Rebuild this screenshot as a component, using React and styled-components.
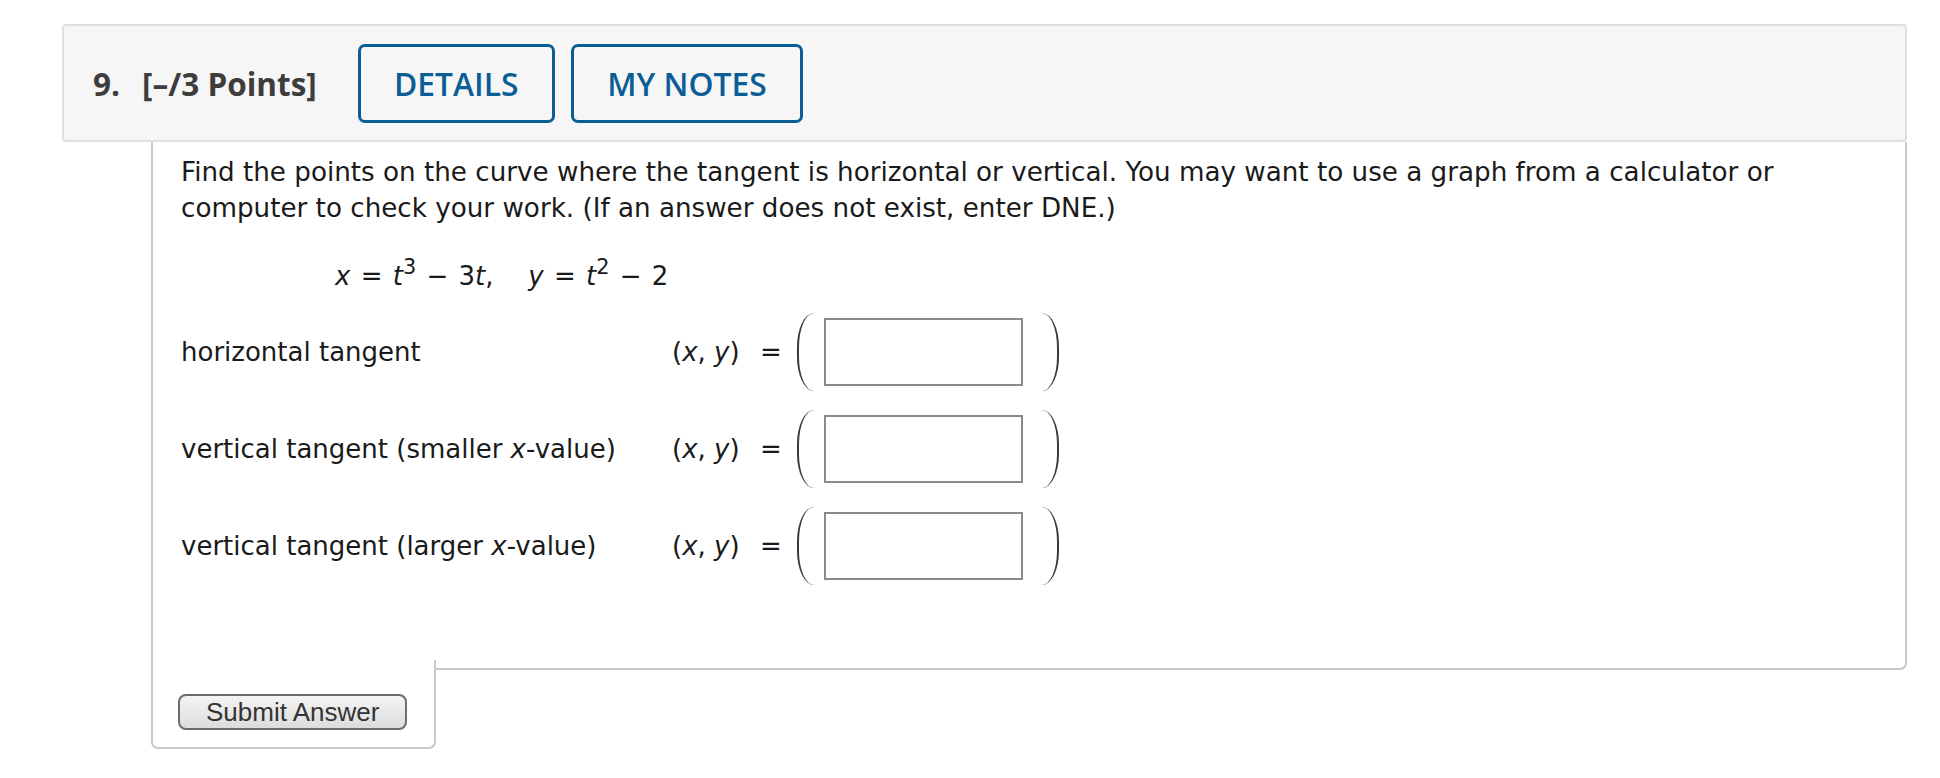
import React from 'react';
import styled, { createGlobalStyle } from 'styled-components';

const GlobalStyle = createGlobalStyle`
  body {
    margin: 0;
    background: #fff;
  }
`;

const Page = styled.div`
  padding: 24px 33px 0 62px;
`;

const QuestionHeader = styled.div`
  box-sizing: border-box;
  height: 118px;
  display: flex;
  align-items: center;
  padding-left: 29px;
  background: #f6f6f6;
  border: 2px solid #dfdfdf;
  border-radius: 4px;
  font-family: "Open Sans", "Noto Sans", sans-serif;
`;

const QuestionNumber = styled.span`
  font-size: 31.5px;
  font-weight: 700;
  color: #3d3d3d;
  margin-right: 22px;
`;

const PointsLabel = styled.span`
  font-size: 31.5px;
  font-weight: 700;
  color: #3d3d3d;
  margin-right: 41px;
`;

const HeaderButton = styled.button`
  box-sizing: border-box;
  height: 79px;
  padding: 0 33.3px;
  margin-right: 16px;
  background: transparent;
  border: 3.5px solid #0b5e95;
  border-radius: 7px;
  font-family: "Open Sans", "Noto Sans", sans-serif;
  font-size: 31.8px;
  font-weight: 600;
  color: #0b5e95;
  cursor: pointer;
`;

const Card = styled.div`
  margin-left: 89px;
`;

const QuestionBody = styled.div`
  border-left: 2px solid #c9c9c9;
  border-right: 2px solid #c9c9c9;
  padding: 12px 28px 76px 28px;
  font-family: "DejaVu Sans", Verdana, sans-serif;
  font-size: 26px;
  line-height: 36px;
  color: #1a1a1a;
`;

const Prompt = styled.p`
  margin: 0;
  font-size: 26.2px;
`;

const Equation = styled.div`
  margin: 32px 0 0 154px;
  white-space: pre;

  i {
    font-style: italic;
  }
  sup {
    font-size: 0.8em;
    line-height: 0;
    vertical-align: 0.55em;
  }
`;

const Op = styled.span`
  margin: 0 ${(p) => p.$gap || 2}px;
`;

const AnswerRows = styled.div`
  margin-top: 19px;
  display: flex;
  flex-direction: column;
  gap: 20px;
`;

const AnswerRow = styled.div`
  display: flex;
  align-items: center;
  height: 77px;
`;

const RowLabel = styled.span`
  width: 491px;
`;

const Coord = styled.span`
  width: 88px;
`;

const Equals = styled.span`
  width: 37px;
`;

const Paren = styled.span`
  box-sizing: border-box;
  display: block;
  width: 17px;
  height: 78px;
  border-color: #3a3a3a;
  border-style: solid;
  border-width: ${(p) => (p.$right ? '0 2.5px 0 0' : '0 0 0 2.5px')};
  border-radius: ${(p) =>
    p.$right ? '0 17px 17px 0 / 0 34px 34px 0' : '17px 0 0 17px / 34px 0 0 34px'};
`;

const AnswerInput = styled.input`
  box-sizing: border-box;
  width: 199px;
  height: 68px;
  margin: 0 19px 0 10px;
  border: 2px solid #8a8a8a;
  background: #fff;
  font-family: "DejaVu Sans", Verdana, sans-serif;
  font-size: 24px;
  outline: none;
`;

const BottomRow = styled.div`
  display: flex;
  align-items: flex-start;
`;

const SubmitTab = styled.div`
  box-sizing: border-box;
  width: 285px;
  padding: 34px 0 17px 25px;
  border-left: 2px solid #c9c9c9;
  border-right: 2px solid #c9c9c9;
  border-bottom: 2px solid #c9c9c9;
  border-radius: 0 0 7px 7px;
`;

const SubmitButton = styled.button`
  box-sizing: border-box;
  height: 36px;
  padding: 0 26px;
  border: 2px solid #6c6c6c;
  border-radius: 8px;
  background: linear-gradient(#f4f4f4, #dcdcdc);
  font-family: "Liberation Sans", Arial, sans-serif;
  font-size: 26px;
  line-height: 30px;
  color: #333;
  cursor: pointer;
`;

const BodyCorner = styled.div`
  flex: 1;
  height: 8px;
  margin-left: -1px;
  border-right: 2px solid #c9c9c9;
  border-bottom: 2px solid #c9c9c9;
  border-bottom-right-radius: 7px;
`;

const rows = [
  { label: 'horizontal tangent' },
  { label: 'vertical tangent (smaller ', suffix: '-value)' },
  { label: 'vertical tangent (larger ', suffix: '-value)' },
];

export default function App() {
  return (
    <Page>
      <GlobalStyle />
      <QuestionHeader>
        <QuestionNumber>9.</QuestionNumber>
        <PointsLabel>[–/3 Points]</PointsLabel>
        <HeaderButton>DETAILS</HeaderButton>
        <HeaderButton>MY NOTES</HeaderButton>
      </QuestionHeader>

      <Card>
        <QuestionBody>
          <Prompt>
            Find the points on the curve where the tangent is horizontal or vertical. You may want
            to use a graph from a calculator or computer to check your work. (If an answer does not
            exist, enter DNE.)
          </Prompt>
          <Equation>
            <i>x</i> <Op>=</Op> <i>t</i>
            <sup>3</sup> <Op>−</Op> 3<i>t</i>,<Op $gap={5}>   </Op><i>y</i> <Op>=</Op> <i>t</i>
            <sup>2</sup> <Op>−</Op> 2
          </Equation>
          <AnswerRows>
            {rows.map((row) => (
              <AnswerRow key={row.label}>
                <RowLabel>
                  {row.label}
                  {row.suffix && (
                    <>
                      <i>x</i>
                      {row.suffix}
                    </>
                  )}
                </RowLabel>
                <Coord>
                  (<i>x</i>, <i>y</i>)
                </Coord>
                <Equals>=</Equals>
                <Paren />
                <AnswerInput type="text" />
                <Paren $right />
              </AnswerRow>
            ))}
          </AnswerRows>
        </QuestionBody>
        <BottomRow>
          <SubmitTab>
            <SubmitButton>Submit Answer</SubmitButton>
          </SubmitTab>
          <BodyCorner />
        </BottomRow>
      </Card>
    </Page>
  );
}
